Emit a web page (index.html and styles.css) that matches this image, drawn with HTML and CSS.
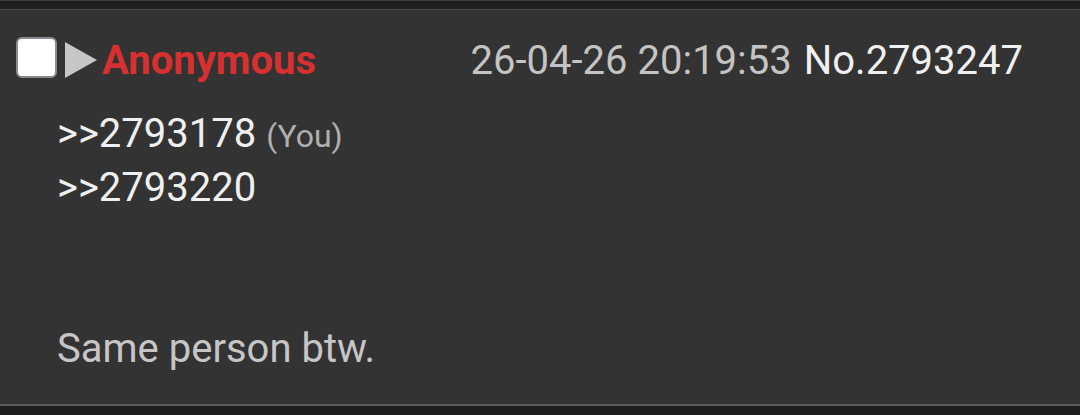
FILE: index.html
```html
<!DOCTYPE html>
<html lang="en">
<head>
  <meta charset="UTF-8" />
  <title>Post</title>
  <link rel="stylesheet" href="styles.css">
</head>
<body>
  <div class="post">
    <div class="post-head">
      <span class="check"></span>
      <svg class="arrow" width="32" height="36" viewBox="0 0 32 36"><polygon points="0,0 32,18 0,36" fill="#c6c6c6"/></svg>
      <span class="name">Anonymous</span>
      <span class="date">26-04-26 20:19:53</span>
      <span class="num">No.2793247</span>
    </div>
    <div class="post-body">
      <div class="quote">&gt;&gt;2793178 <span class="you">(You)</span></div>
      <div class="quote">&gt;&gt;2793220</div>
      <div class="text">Same person btw.</div>
    </div>
  </div>
</body>
</html>
```

FILE: styles.css
```css
body {
  margin: 0;
  background: #1f1f1f;
  border-top: 1px solid #3c3c3c;
  font-family: Roboto, "Noto Sans", sans-serif;
  height: 414px;
  overflow: hidden;
}
.post {
  margin-top: 8px;
  background: #333333;
  border-top: 1px solid #4a4a4a;
  border-bottom: 2px solid #5c5c5c;
  height: 394px;
}
.post-head {
  display: flex;
  align-items: center;
  padding: 27px 57px 0 16px;
  height: 41px;
}
.check {
  width: 37px;
  height: 37px;
  background: #fff;
  border: 2px solid #8a8a94;
  border-radius: 6px;
}
.arrow {
  margin: 4px 0 0 8px;
}
.name,
.date,
.num {
  margin-top: 6px;
  font-size: 40px;
}
.name {
  margin-left: 5px;
  color: #d63031;
  font-weight: bold;
}
.date {
  margin-left: auto;
  color: #c4c4c4;
}
.num {
  margin-left: 12px;
  color: #f0f0f0;
}
.post-body {
  padding: 30px 0 0 57px;
  font-size: 40px;
  color: #f0f0f0;
}
.quote {
  line-height: 52px;
}
.you {
  color: #b0b0b0;
  font-size: 32px;
}
.text {
  margin-top: 111px;
  color: #c6c6c6;
}
```
